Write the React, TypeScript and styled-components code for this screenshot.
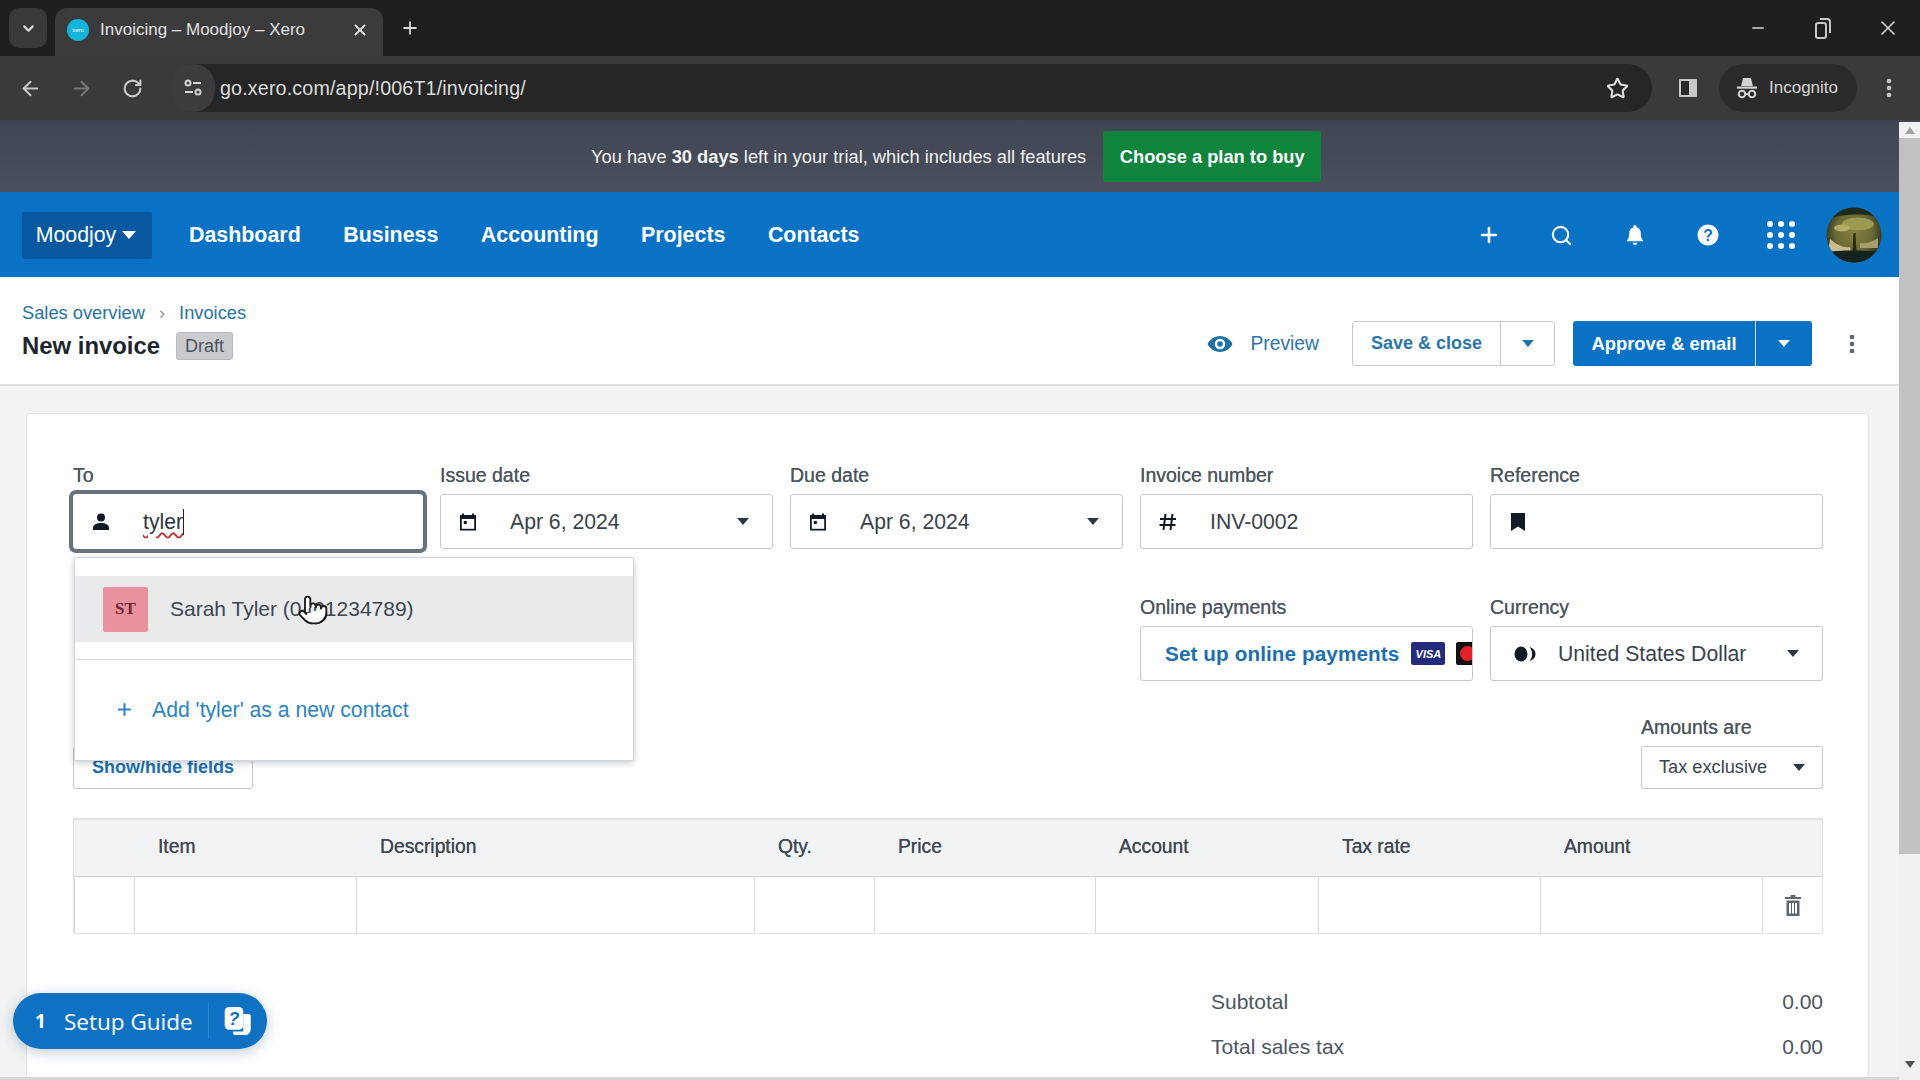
import React from "react";
import styled, { createGlobalStyle } from "styled-components";
import { ArrowLeft, ArrowRight, ChevronDown, EllipsisVertical, Minus, Plus, Pointer, RotateCw, Search, Star, X } from "lucide-react";

const Global = createGlobalStyle`
  html, body { margin: 0; padding: 0; overflow: hidden; background: #fff; }
  * { box-sizing: border-box; }
`;
const SANS = `"Liberation Sans", Arial, sans-serif`;

const Root = styled.div`
  position: relative; width: 1920px; height: 1080px; display: flex; flex-direction: column;
  overflow: hidden; font-family: ${SANS}; color: #3c4650;
`;
/* browser chrome */
const TabStrip = styled.div`
  height: 56px; background: #1f1f1f; display: flex; align-items: flex-end; padding-left: 9px; color: #d8d8d8;
`;
const TabSearch = styled.div`
  width: 38px; height: 40px; margin-bottom: 8px; border-radius: 10px; background: #393939;
  display: flex; align-items: center; justify-content: center;
`;
const Tab = styled.div`
  width: 328px; height: 48px; margin-left: 8px; padding: 0 14px 4px 12px; background: #3b3b3b; border-radius: 12px 12px 0 0;
  display: flex; align-items: center; font-size: 17px; color: #e0e0e0;
`;
const Favicon = styled.span`
  width: 22px; height: 22px; border-radius: 50%; background: #14b5dd; margin-right: 11px; flex: none;
  display: flex; align-items: center; justify-content: center; font-size: 6px; color: #fff;
`;
const TabTitle = styled.span` flex: 1; white-space: nowrap; `;
const NewTab = styled.div` margin-left: 17px; margin-bottom: 8px; height: 40px; display: flex; align-items: center; `;
const WindowControls = styled.div`
  margin-left: auto; height: 56px; display: flex; align-items: center;
`;
const WinSlot = styled.span` width: 65px; display: flex; justify-content: center; `;
const Toolbar = styled.div`
  height: 64px; background: #3a3a3a; display: flex; align-items: center; color: #c8c8c8; padding-left: 5px;
`;
const NavIcon = styled.span<{ $dim?: boolean }>`
  width: 51px; display: flex; justify-content: center; color: ${p => (p.$dim ? "#777" : "#c8c8c8")};
`;
const UrlPill = styled.div`
  width: 1481px; height: 48px; margin-left: 13px; background: #262626; border-radius: 24px;
  display: flex; align-items: center; font-size: 19.7px; color: #dcdcdc;
`;
const SiteIcon = styled.span`
  width: 44px; height: 48px; border-radius: 24px; background: #3c3c3c; display: flex; align-items: center; justify-content: center; margin-right: 5px;
`;
const UrlText = styled.span` flex: 1; letter-spacing: 0.15px; `;
const StarSlot = styled.span` width: 68px; padding-right: 1px; display: flex; justify-content: center; `;
const SidePanel = styled.span` width: 67px; padding-left: 4px; display: flex; justify-content: center; `;
const IncognitoPill = styled.div`
  width: 138px; height: 48px; border-radius: 24px; background: #2b2b2b; display: flex; align-items: center; padding-left: 16px; gap: 10px; font-size: 17px; color: #d4d4d4;
`;
const MenuSlot = styled.span` width: 63px; display: flex; justify-content: center; `;

/* page */
const PageArea = styled.div` flex: 1; min-height: 0; display: flex; `;
const Main = styled.div` flex: 1; min-width: 0; display: flex; flex-direction: column; `;
const ScrollTrack = styled.div`
  width: 21px; background: #f1f1f1; display: flex; flex-direction: column; align-items: center; border-top: 2px solid #3f4451;
`;
const ScrollArrow = styled.span<{ $down?: boolean }>`
  height: 16px; flex: none; display: flex; align-items: center; justify-content: center; font-size: 0;
  margin-top: ${p => (p.$down ? "auto" : "0")};
  margin-bottom: ${p => (p.$down ? "8px" : "0")};
  &::after { content: ""; border: 5px solid transparent;
    ${p => (p.$down ? "border-top: 7px solid #505050; border-bottom: 0;" : "border-bottom: 7px solid #a3a3a3; border-top: 0;")} }
`;
const ScrollThumb = styled.div` width: 100%; height: 716px; background: #c1c1c1; `;
const Banner = styled.div`
  height: 72px; background: linear-gradient(#404552, #4a4f5d); display: flex; align-items: center; padding: 1px 0 0 591px;
  color: #f2f2f2; font-size: 18.3px;
`;
const BannerText = styled.span` b { font-weight: 700; } `;
const PlanButton = styled.button`
  margin-left: 17px; width: 218px; height: 51px; border: 0; border-radius: 2px; background: #0f843d; color: #fff;
  font: 700 18.3px ${SANS};
`;
const Nav = styled.nav`
  height: 85px; background: #0a72c5; display: flex; align-items: center; padding: 1px 9px 0 22px; color: #fff;
`;
const OrgButton = styled.div`
  width: 130px; height: 47px; background: #07589f; border-radius: 2px; display: flex; align-items: center; justify-content: center; gap: 6px; padding-right: 2px;
  font-size: 21.3px; margin-right: 37px;
`;
const NavLinks = styled.div` display: flex; gap: 42.5px; font-size: 21.4px; font-weight: 700; `;
const NavTools = styled.div` margin-left: auto; display: flex; align-items: center; `;
const ToolSlot = styled.span` width: 73px; display: flex; justify-content: center; `;
const AvatarArt = styled.svg` display: block; `;
const Header = styled.header`
  height: 109px; background: #fff; border-bottom: 2px solid #dfe1e3; display: flex; padding: 0 28px 0 22px; justify-content: space-between;
`;
const Crumbs = styled.div`
  margin-top: 25px; display: flex; align-items: center; gap: 14px; font-size: 18.3px; color: #28729f;
`;
const CrumbSep = styled.span` color: #8b949c; display: flex; `;
const TitleRow = styled.div` margin-top: 8px; display: flex; align-items: center; gap: 16px; `;
const PageTitle = styled.h1` margin: 0; font-size: 23.9px; font-weight: 700; color: #1d2530; `;
const Badge = styled.span`
  width: 57px; height: 28px; border-radius: 3px; background: #c9cbce; border: 1px solid #b8babd; color: #4c5560; font-size: 18px;
  display: flex; align-items: center; justify-content: center;
`;
const Actions = styled.div` margin-top: 44px; display: flex; align-items: flex-start; `;
const PreviewLink = styled.div`
  height: 45px; display: flex; align-items: center; gap: 17px; color: #2a76a9; font-size: 19.3px; margin-right: 33px;
`;
const SplitButton = styled.div<{ $primary?: boolean; $w: number }>`
  width: ${p => p.$w}px; height: 45px; display: flex; border-radius: 3px; margin-right: ${p => (p.$primary ? "0" : "18px")};
  background: ${p => (p.$primary ? "#0a72c5" : "#fff")};
  color: ${p => (p.$primary ? "#fff" : "#2a76a9")};
  border: ${p => (p.$primary ? "0" : "1px solid #c4c8cc")};
  font-size: ${p => (p.$primary ? "18.4px" : "18px")}; font-weight: 700;
`;
const SplitLabel = styled.span` flex: 1; display: flex; align-items: center; justify-content: center; `;
const SplitCaret = styled.span<{ $primary?: boolean; $w: number }>`
  width: ${p => p.$w}px; display: flex; align-items: center; justify-content: center;
  border-left: 1px solid ${p => (p.$primary ? "#cfe4f4" : "#c4c8cc")};
`;
const Kebab = styled.span` width: 39px; margin-left: 20px; height: 45px; display: flex; align-items: center; justify-content: flex-start; color: #59636d; padding-left: 8px; `;
const Body = styled.div` flex: 1; min-height: 0; background: #f2f3f4; padding: 27px 30px 0 26px; overflow: hidden; `;
const HScroll = styled.div` height: 3px; flex: none; background: #d5d6d7; `;
const Card = styled.section`
  height: 720px; background: #fff; border: 1px solid #dfe1e3; border-radius: 3px 3px 0 0; padding: 51px 45px 0 46px;
`;
const FieldGrid = styled.div`
  display: grid; grid-template-columns: 350px repeat(4, 333px); column-gap: 17px;
`;
const Field = styled.div<{ $col?: number }>`
  position: relative; ${p => (p.$col ? `grid-column: ${p.$col};` : "")}
`;
const SecondRow = styled(FieldGrid)` margin-top: 48px; `;
const Label = styled.div`
  height: 20px; line-height: 20px; margin-bottom: 9px; font-size: 19.5px; color: #4c5660; white-space: nowrap; text-shadow: 0 0 0.3px #4c5660;
`;
const InputBox = styled.div<{ $focus?: boolean; $clip?: boolean }>`
  height: 55px; background: #fff; border: 1px solid #c4c8cc; border-radius: 3px; display: flex; align-items: center;
  color: #39424c; font-size: 21.2px; white-space: nowrap;
  ${p => (p.$focus ? "box-shadow: 0 0 0 4px #697380; border-color: #fff;" : "")}
  ${p => (p.$clip ? "overflow: hidden;" : "")}
`;
const FieldIcon = styled.span<{ $w?: number; $pad?: number }>`
  width: ${p => p.$w ?? 69}px; flex: none; display: flex; justify-content: center; padding-right: ${p => p.$pad ?? 16}px; color: #111a26;
`;
const Typed = styled.span`
  text-decoration: underline wavy #c4302b 1.5px; text-underline-offset: 3px; border-right: 1.5px solid #222;
  line-height: 26px; color: #2e3640;
`;
const FieldValue = styled.span` flex: 1; `;
const CaretSlot = styled.span` width: 55px; display: flex; justify-content: center; padding-right: 3px; `;
const Dropdown = styled.div`
  position: absolute; z-index: 2; left: 1px; top: 92px; width: 560px; height: 204px; background: #fff; padding-top: 18px;
  border: 1px solid #d4d7da; box-shadow: 0 2px 6px rgba(30, 40, 50, 0.25); border-radius: 2px;
`;
const OptionRow = styled.div`
  height: 66px; background: #e9eaec; display: flex; align-items: center; padding-left: 28px; gap: 22px; font-size: 21px; color: #3c4650;
`;
const Initials = styled.span`
  width: 45px; height: 45px; border-radius: 2px; background: #ea919e; color: #6e2430; font: 700 17px "Liberation Serif", serif;
  display: flex; align-items: center; justify-content: center;
`;
const DropDivider = styled.div` margin-top: 17px; border-top: 1px solid #d9dcdf; `;
const AddRow = styled.div`
  height: 99px; display: flex; align-items: center; padding-left: 40px; gap: 18px; color: #2a84bd; font-size: 21.2px;
`;
const HandCursor = styled.span`
  position: absolute; z-index: 3; left: 224px; top: 129px; color: #1c1c1c; display: flex;
`;
const PaymentsLink = styled.span`
  margin-left: 24px; color: #1c70ae; font-size: 20.7px; font-weight: 700; margin-right: 12px; letter-spacing: 0.1px;
`;
const VisaBadge = styled.span`
  width: 34px; height: 23px; flex: none; border-radius: 2px; background: #242a7c; color: #fff; font: italic 700 11px ${SANS};
  display: flex; align-items: center; justify-content: center;
`;
const CardBadge = styled.span`
  width: 34px; height: 23px; flex: none; margin-left: 11px; border-radius: 2px; background: #111;
  display: flex; align-items: center; padding-left: 4px;
  &::before { content: ""; width: 15px; height: 15px; border-radius: 50%; background: #e2202c; flex: none; }
`;
const OptionsRow = styled.div` margin-top: 36px; display: flex; justify-content: space-between; align-items: flex-end; `;
const ShowHide = styled.button`
  width: 180px; height: 43px; background: #fff; border: 1px solid #c4c8cc; border-radius: 3px; color: #1c70ae; font: 700 18px ${SANS};
`;
const TaxField = styled.div` width: 182px; `;
const TaxSelect = styled.div`
  height: 43px; border: 1px solid #c4c8cc; border-radius: 3px; display: flex; align-items: center; padding: 0 17px 0 17px; justify-content: space-between;
  font-size: 18.2px; color: #39424c;
`;
const Table = styled.div`
  margin-top: 29px; border: 1px solid #dfe1e3; border-top-width: 2px; border-radius: 2px;
  display: grid; grid-template-columns: 60px 222px 398px 120px 221px 223px 222px 222px 1fr;
`;
const HeadCell = styled.div`
  height: 57px; background: #f2f3f4; border-bottom: 1px solid #cfd2d5; display: flex; align-items: center; padding: 0 0 2px 24px;
  font-size: 19.3px; font-weight: 400; color: #3f4852; text-shadow: 0 0 0.4px #3f4852;
`;
const BodyCell = styled.div`
  height: 56px; border-left: 1px solid #d7d9dc; display: flex; align-items: center; justify-content: center; color: #5d666f;
  &:first-of-type { border-left: 0; }
`;
const Totals = styled.div` margin: 45px 0 0 auto; width: 612px; `;
const TotalRow = styled.div` height: 45px; display: flex; align-items: center; justify-content: space-between; font-size: 21px; color: #4c5660; `;
const SetupGuide = styled.div`
  position: absolute; z-index: 4; left: 13px; bottom: 31px; width: 254px; height: 56px; border-radius: 28px; background: #0e71c2; color: #fff;
  box-shadow: 0 3px 14px rgba(20, 60, 100, 0.28); display: flex; align-items: center; padding-left: 22px; font-family: "Open Sans", sans-serif;
`;
const GuideCount = styled.span` width: 29px; font-size: 19px; font-weight: 700; `;
const GuideLabel = styled.span` font-size: 22.5px; font-weight: 500; width: 144px; white-space: nowrap; `;
const GuideIcon = styled.span` flex: 1; height: 36px; border-left: 1px solid #2c86cf; display: flex; justify-content: center; align-items: center; padding-right: 2px; `;

const Tri = ({ c, w = 12 }: { c: string; w?: number }) => (
  <svg width={w} height={w * 0.58} viewBox="0 0 12 7"><path d="M0 0h12L6 7z" fill={c} /></svg>
);
const PersonIcon = () => (
  <svg width="20" height="20" viewBox="0 0 20 20" fill="currentColor"><circle cx="10" cy="5.6" r="4" /><path d="M2 18v-2c0-3.300 3.600-5 8-5s8 1.700 8 5v2z" /></svg>
);
const CalendarIcon = () => (
  <svg width="20" height="20" viewBox="0 0 20 20"><path d="M4 1.500h2V3h8V1.500h2V3h2v15.500H2V3h2z" fill="currentColor" /><rect x="3.800" y="7" width="12.400" height="9.800" fill="#fff" /><rect x="5.800" y="9" width="3" height="3" fill="currentColor" /></svg>
);
const HashIcon = () => (
  <svg width="20" height="20" viewBox="0 0 20 20" fill="none" stroke="currentColor" strokeWidth="2"><path d="M7.500 2 5.500 18M14.500 2l-2 16M2 7h16M1.500 13h16" /></svg>
);
const BookmarkIcon = () => (
  <svg width="16" height="20" viewBox="0 0 16 20"><path d="M1 1h14v18l-7-4.500L1 19z" fill="currentColor" /></svg>
);
const CurrencyIcon = () => (
  <svg width="22" height="16" viewBox="0 0 22 16" fill="currentColor"><ellipse cx="7" cy="8" rx="6.500" ry="7.500" /><path d="M15.500 1c4.200 1.500 6 4 6 7s-1.800 5.500-6 7c1.800-2 2.600-4.500 2.600-7s-.8-5-2.600-7z" /></svg>
);
const EyeIcon = () => (
  <svg width="26" height="20" viewBox="0 0 26 20"><path d="M13 2C7 2 2.500 6 0.500 10 2.500 14 7 18 13 18s10.500-4 12.500-8C23.500 6 19 2 13 2z" fill="#1f72a8" /><circle cx="13" cy="10" r="5.200" fill="#fff" /><circle cx="13" cy="10" r="2.800" fill="#1f72a8" /></svg>
);
const BellIcon = () => (
  <svg width="18" height="22" viewBox="0 0 20 24" fill="#fff"><path d="M10 1c1 0 1.800.8 1.800 1.800v.6C15 4.300 16.500 7 16.500 10.500c0 4 1 5.800 2.500 7.500v1H1v-1c1.500-1.700 2.500-3.500 2.500-7.500C3.500 7 5 4.300 8.200 3.400v-.6C8.200 1.800 9 1 10 1z" /><path d="M7.500 20.500h5A2.500 2.500 0 0 1 7.500 20.500z" /></svg>
);
const HelpIcon = () => (
  <svg width="22" height="22" viewBox="0 0 24 24"><circle cx="12" cy="12" r="11.500" fill="#fff" /><text x="12" y="18" textAnchor="middle" fontSize="17" fontWeight="700" fontFamily="Liberation Sans" fill="#0a72c5">?</text></svg>
);
const GridIcon = () => (
  <svg width="30" height="30" viewBox="0 0 30 30" fill="#fff">
    {[4, 15, 26].flatMap(y => [4, 15, 26].map(x => <circle key={`${x}-${y}`} cx={x} cy={y} r="3" />))}
  </svg>
);
const AvatarImage = () => (
  <AvatarArt width="56" height="56" viewBox="0 0 56 56">
    <defs>
      <radialGradient id="sky" cx="50%" cy="45%" r="56%">
        <stop offset="0" stopColor="#86803f" />
        <stop offset="0.6" stopColor="#6a6a34" />
        <stop offset="0.88" stopColor="#3c4024" />
        <stop offset="1" stopColor="#141a14" />
      </radialGradient>
      <clipPath id="disc"><circle cx="28" cy="28" r="27.500" /></clipPath>
    </defs>
    <circle cx="28" cy="28" r="27.500" fill="url(#sky)" />
    <g clipPath="url(#disc)">
      <path d="M0 0h56v11C44 6 14 6 0 13z" fill="#1c2a1c" />
      <ellipse cx="32" cy="17" rx="16" ry="6.500" fill="#9a9a52" />
      <ellipse cx="16" cy="21" rx="8" ry="3.500" fill="#b2ab66" />
      <path d="M4 32c7 6 14 9 20 8l1 6H2z" fill="#c9bb8c" />
      <path d="M34 36c6 1 12-1 18-5v10H34z" fill="#a99d70" />
      <path d="M27.500 26h2l1 20h-4z" fill="#2a2a18" />
      <path d="M0 45c16-2 36-2 56 0v11H0z" fill="#15231f" />
    </g>
  </AvatarArt>
);
const TrashIcon = () => (
  <svg width="16" height="21" viewBox="0 0 16 21"><path d="M5.500 0h5v2H16v2H0V2h5.500z" fill="currentColor" /><path d="M1.500 5.500h13V21h-13z" fill="currentColor" /><path d="M4 8h2v10.500H4zM7 8h2v10.500H7zM10 8h2v10.500h-2z" fill="#fff" /></svg>
);
const GuideGlyph = () => (
  <svg width="29" height="30" viewBox="0 0 31 34"><path d="M22 9h6c1.500 0 2.500 1 2.500 2.500V26c0 4-3 7-7 7H13c-1.500 0-2.500-1-2.500-2.500V29H22z" fill="#fff" /><rect x="1" y="1" width="21" height="26" rx="5" fill="#fff" /><text x="11.500" y="22" textAnchor="middle" fontSize="20" fontWeight="700" fontStyle="italic" fontFamily="Liberation Sans" fill="#0e71c2">?</text></svg>
);
const TuneIcon = () => (
  <svg width="20" height="20" viewBox="0 0 20 20" fill="none" stroke="#d4d4d4" strokeWidth="2"><circle cx="5" cy="5" r="2.500" /><path d="M10 5h8M2 14h8" /><circle cx="15" cy="14" r="2.500" /></svg>
);
const SidebarIcon = () => (
  <svg width="20" height="20" viewBox="0 0 20 20"><rect x="1" y="1" width="18" height="18" rx="1" fill="#c8c8c8" /><rect x="3" y="3" width="8" height="14" fill="#2a2a2a" /></svg>
);
const IncognitoIcon = () => (
  <svg width="24" height="24" viewBox="0 0 24 24" fill="#d4d4d4"><path d="M8 2h8l1.800 8H6.200z" /><rect x="2" y="10.500" width="20" height="2.200" /><circle cx="7" cy="18" r="3.300" fill="none" stroke="#d4d4d4" strokeWidth="2" /><circle cx="17" cy="18" r="3.300" fill="none" stroke="#d4d4d4" strokeWidth="2" /><path d="M10 17h4v2h-4z" /></svg>
);
const RestoreIcon = () => (
  <svg width="16" height="22" viewBox="0 0 16 22" fill="none" stroke="#c8c8c8" strokeWidth="2"><rect x="1" y="6" width="10" height="15" rx="2" /><path d="M5 2h7a3 3 0 0 1 3 3v11" /></svg>
);

const columns = ["", "Item", "Description", "Qty.", "Price", "Account", "Tax rate", "Amount", ""];

export default function App() {
  return (
    <Root>
      <Global />
      <TabStrip>
        <TabSearch><ChevronDown size={17} strokeWidth={3} /></TabSearch>
        <Tab>
          <Favicon>xero</Favicon>
          <TabTitle>Invoicing – Moodjoy – Xero</TabTitle>
          <X size={18} strokeWidth={2.5} />
        </Tab>
        <NewTab><Plus size={20} strokeWidth={2.2} /></NewTab>
        <WindowControls>
          <WinSlot><Minus size={18} /></WinSlot>
          <WinSlot><RestoreIcon /></WinSlot>
          <WinSlot><X size={24} strokeWidth={1.6} /></WinSlot>
        </WindowControls>
      </TabStrip>
      <Toolbar>
        <NavIcon><ArrowLeft size={23} strokeWidth={2.2} /></NavIcon>
        <NavIcon $dim><ArrowRight size={23} strokeWidth={2.2} /></NavIcon>
        <NavIcon><RotateCw size={21} strokeWidth={2.4} /></NavIcon>
        <UrlPill>
          <SiteIcon><TuneIcon /></SiteIcon>
          <UrlText>go.xero.com/app/!006T1/invoicing/</UrlText>
          <StarSlot><Star size={23} strokeWidth={2.2} /></StarSlot>
        </UrlPill>
        <SidePanel><SidebarIcon /></SidePanel>
        <IncognitoPill><IncognitoIcon />Incognito</IncognitoPill>
        <MenuSlot><EllipsisVertical size={24} strokeWidth={2.6} /></MenuSlot>
      </Toolbar>
      <PageArea>
        <Main>
          <Banner>
            <BannerText>You have <b>30 days</b> left in your trial, which includes all features</BannerText>
            <PlanButton>Choose a plan to buy</PlanButton>
          </Banner>
          <Nav>
            <OrgButton>Moodjoy <Tri c="#fff" w={14} /></OrgButton>
            <NavLinks>
              <span>Dashboard</span><span>Business</span><span>Accounting</span><span>Projects</span><span>Contacts</span>
            </NavLinks>
            <NavTools>
              <ToolSlot><Plus size={24} strokeWidth={2.6} /></ToolSlot>
              <ToolSlot><Search size={23} strokeWidth={2.2} /></ToolSlot>
              <ToolSlot><BellIcon /></ToolSlot>
              <ToolSlot><HelpIcon /></ToolSlot>
              <ToolSlot><GridIcon /></ToolSlot>
              <ToolSlot><AvatarImage /></ToolSlot>
            </NavTools>
          </Nav>
          <Header>
            <div>
              <Crumbs>Sales overview <CrumbSep>›</CrumbSep> Invoices</Crumbs>
              <TitleRow><PageTitle>New invoice</PageTitle><Badge>Draft</Badge></TitleRow>
            </div>
            <Actions>
              <PreviewLink><EyeIcon />Preview</PreviewLink>
              <SplitButton $w={203}>
                <SplitLabel>Save &amp; close</SplitLabel>
                <SplitCaret $w={54}><Tri c="#1f72a8" /></SplitCaret>
              </SplitButton>
              <SplitButton $primary $w={239}>
                <SplitLabel>Approve &amp; email</SplitLabel>
                <SplitCaret $primary $w={57}><Tri c="#fff" /></SplitCaret>
              </SplitButton>
              <Kebab><EllipsisVertical size={24} strokeWidth={2.6} /></Kebab>
            </Actions>
          </Header>
          <Body>
            <Card>
              <FieldGrid>
                <Field>
                  <Label>To</Label>
                  <InputBox $focus>
                    <FieldIcon><PersonIcon /></FieldIcon>
                    <Typed>tyler</Typed>
                  </InputBox>
                  <Dropdown>
                    <OptionRow><Initials>ST</Initials>Sarah Tyler (0401234789)</OptionRow>
                    <DropDivider />
                    <AddRow><Plus size={19} strokeWidth={2.6} />Add 'tyler' as a new contact</AddRow>
                  </Dropdown>
                  <HandCursor><Pointer size={32} fill="#fff" strokeWidth={1.4} /></HandCursor>
                </Field>
                <Field>
                  <Label>Issue date</Label>
                  <InputBox>
                    <FieldIcon><CalendarIcon /></FieldIcon>
                    <FieldValue>Apr 6, 2024</FieldValue>
                    <CaretSlot><Tri c="#2e3640" /></CaretSlot>
                  </InputBox>
                </Field>
                <Field>
                  <Label>Due date</Label>
                  <InputBox>
                    <FieldIcon><CalendarIcon /></FieldIcon>
                    <FieldValue>Apr 6, 2024</FieldValue>
                    <CaretSlot><Tri c="#2e3640" /></CaretSlot>
                  </InputBox>
                </Field>
                <Field>
                  <Label>Invoice number</Label>
                  <InputBox>
                    <FieldIcon><HashIcon /></FieldIcon>
                    <FieldValue>INV-0002</FieldValue>
                  </InputBox>
                </Field>
                <Field>
                  <Label>Reference</Label>
                  <InputBox><FieldIcon><BookmarkIcon /></FieldIcon></InputBox>
                </Field>
              </FieldGrid>
              <SecondRow>
                <Field $col={4}>
                  <Label>Online payments</Label>
                  <InputBox $clip>
                    <PaymentsLink>Set up online payments</PaymentsLink>
                    <VisaBadge>VISA</VisaBadge>
                    <CardBadge />
                  </InputBox>
                </Field>
                <Field $col={5}>
                  <Label>Currency</Label>
                  <InputBox>
                    <FieldIcon $w={67} $pad={0}><CurrencyIcon /></FieldIcon>
                    <FieldValue>United States Dollar</FieldValue>
                    <CaretSlot><Tri c="#2e3640" /></CaretSlot>
                  </InputBox>
                </Field>
              </SecondRow>
              <OptionsRow>
                <ShowHide>Show/hide fields</ShowHide>
                <TaxField>
                  <Label>Amounts are</Label>
                  <TaxSelect>Tax exclusive<Tri c="#2e3640" /></TaxSelect>
                </TaxField>
              </OptionsRow>
              <Table>
                {columns.map((c, i) => <HeadCell key={i}>{c}</HeadCell>)}
                {columns.map((_, i) => <BodyCell key={i}>{i === 8 ? <TrashIcon /> : null}</BodyCell>)}
              </Table>
              <Totals>
                <TotalRow><span>Subtotal</span><span>0.00</span></TotalRow>
                <TotalRow><span>Total sales tax</span><span>0.00</span></TotalRow>
              </Totals>
            </Card>
          </Body>
          <HScroll />
        </Main>
        <ScrollTrack>
          <ScrollArrow />
          <ScrollThumb />
          <ScrollArrow $down />
        </ScrollTrack>
      </PageArea>
      <SetupGuide>
        <GuideCount>1</GuideCount>
        <GuideLabel>Setup Guide</GuideLabel>
        <GuideIcon><GuideGlyph /></GuideIcon>
      </SetupGuide>
    </Root>
  );
}
